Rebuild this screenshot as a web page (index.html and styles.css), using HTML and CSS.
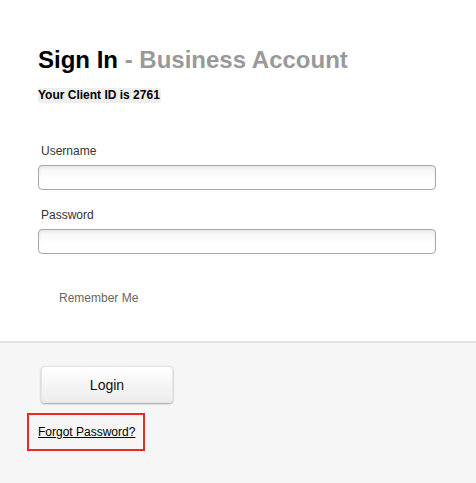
FILE: index.html
```html
<!DOCTYPE html>
<html>
<head>
<meta charset="utf-8">
<link rel="stylesheet" href="styles.css">
</head>
<body>
<div class="page">
  <section class="main">
    <h1 class="title">Sign In <span class="sub">- Business Account</span></h1>
    <p class="client"><span class="client-id">Your Client ID is 2761</span></p>
    <div class="field">
      <label class="label" for="user">Username</label>
      <input class="input" id="user" type="text">
    </div>
    <div class="field">
      <label class="label" for="pass">Password</label>
      <input class="input" id="pass" type="password">
    </div>
    <div class="remember">Remember Me</div>
  </section>
  <section class="footer">
    <button class="login" type="button">Login</button>
    <div class="forgot-box"><a class="forgot" href="#">Forgot Password?</a></div>
  </section>
</div>
</body>
</html>
```
FILE: styles.css
```css
html, body {
  margin: 0;
  padding: 0;
  height: 100%;
}
body {
  font-family: "Liberation Sans", Arial, Helvetica, sans-serif;
  color: #000;
  background: #f5f5f5;
}
.page {
  display: flex;
  flex-direction: column;
  min-height: 100%;
}
.main {
  background: #fff;
  padding: 46px 40px 0 38px;
  height: 295px;
  border-bottom: 2px solid #e2e2e2;
  box-sizing: content-box;
}
.title {
  margin: 0;
  font-size: 24px;
  line-height: 28px;
  font-weight: bold;
  color: #000;
}
.sub {
  color: #999;
}
.client {
  margin: 13px 0 0;
  font-size: 12px;
  line-height: 16px;
}
.client-id {
  display: inline-block;
  background: #eeeeee;
  border-radius: 3px;
  padding: 0 1px 0 0;
  font-weight: bold;
  line-height: 15px;
}
.field {
  display: flex;
  flex-direction: column;
}
.label {
  font-size: 12px;
  line-height: 14px;
  color: #333;
  padding-left: 3px;
  margin-bottom: 7px;
}
.client + .field { margin-top: 41px; }
.field + .field { margin-top: 18px; }
.input {
  box-sizing: border-box;
  width: 398px;
  height: 25px;
  margin: 0;
  border: 1px solid #a8a8a8;
  border-radius: 4px;
  background: linear-gradient(#f2f2f2, #fff 55%);
  box-shadow: inset 0 1px 3px rgba(0,0,0,0.06);
  font: 12px "Liberation Sans", Arial, sans-serif;
}
.remember {
  margin-top: 37px;
  padding-left: 21px;
  font-size: 12px;
  line-height: 14px;
  color: #666;
}
.footer {
  flex: 1;
  background: #f6f6f6;
  padding: 23px 0 0 27px;
}
.login {
  display: block;
  margin-left: 14px;
  width: 132px;
  height: 37px;
  border: 1px solid #e4e4e4;
  border-radius: 4px;
  background: linear-gradient(#ffffff, #f4f4f4 60%, #ececec);
  box-shadow: 0 1px 2px rgba(0,0,0,0.35);
  font-family: "Liberation Sans", Arial, sans-serif;
  font-size: 14px;
  color: #111;
  padding: 0;
}
.forgot-box {
  margin-top: 10px;
  box-sizing: border-box;
  width: 118px;
  height: 38px;
  border: 2px solid #ee2a20;
  display: flex;
  align-items: center;
  padding-left: 9px;
}
.forgot {
  font-size: 12px;
  color: #000;
  text-decoration: underline;
}
```
